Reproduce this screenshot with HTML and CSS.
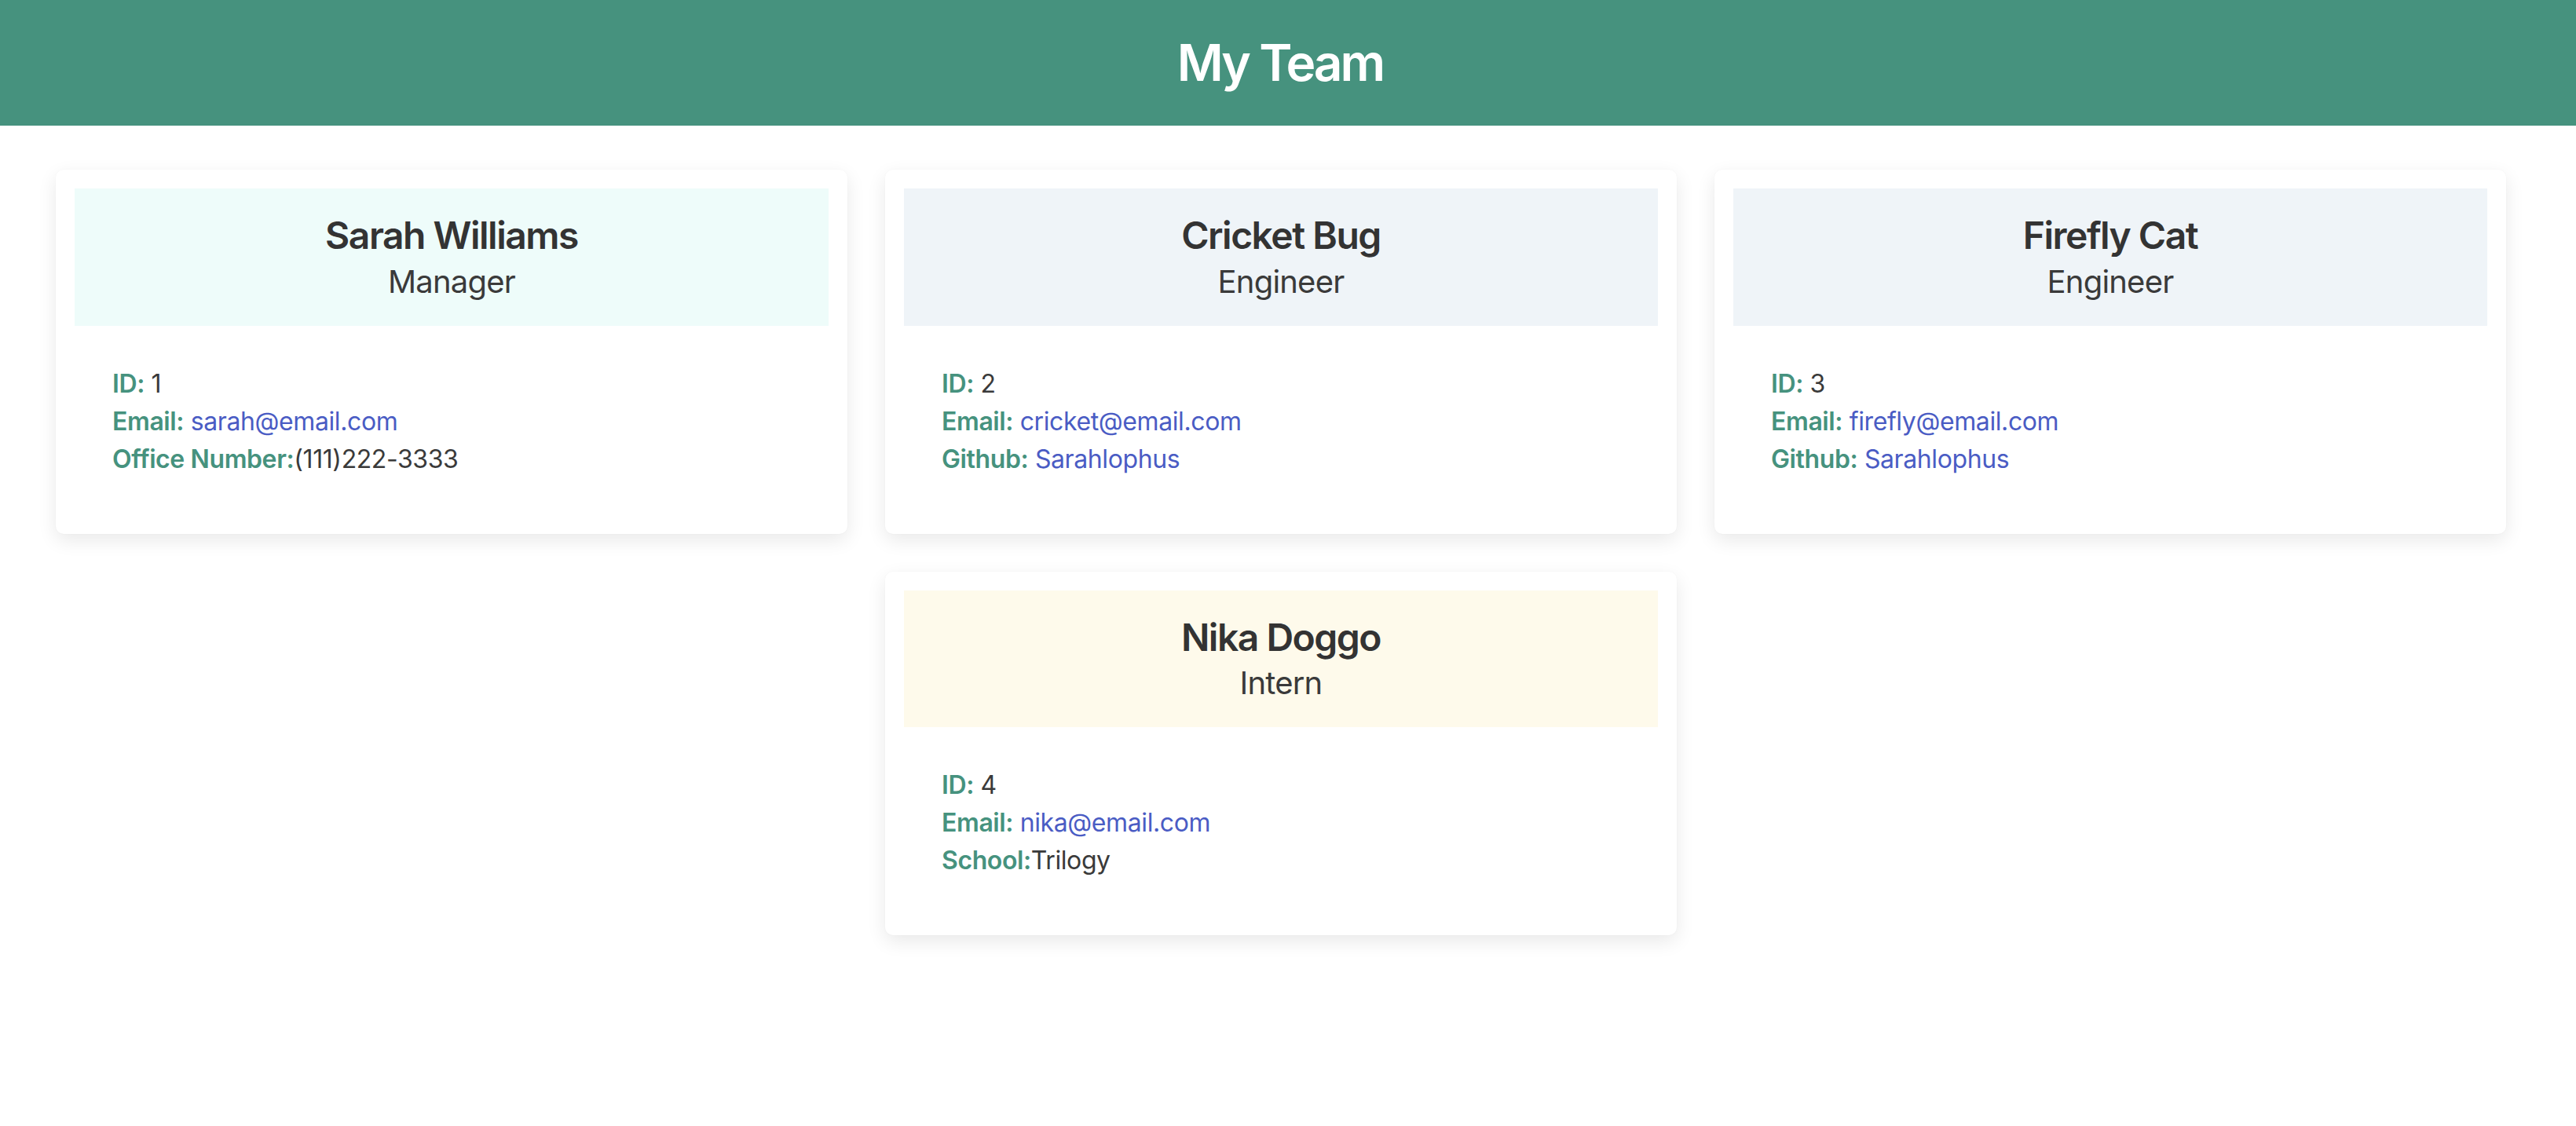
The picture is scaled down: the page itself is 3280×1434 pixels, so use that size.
FILE: index.html
```html
<!DOCTYPE html>
<html lang="en">
<head>
<meta charset="utf-8">
<title>My Team</title>
<link rel="stylesheet" href="styles.css">
</head>
<body>
<header class="topbar">
  <h1 class="topbar-title">My Team</h1>
</header>
<main class="team">
  <section class="card">
    <div class="card-head head-manager">
      <h2 class="card-name">Sarah Williams</h2>
      <p class="card-role">Manager</p>
    </div>
    <ul class="card-body">
      <li><span class="label">ID:</span> 1</li>
      <li><span class="label">Email:</span> <a class="link" href="#">sarah@email.com</a></li>
      <li><span class="label">Office Number:</span>(111)222-3333</li>
    </ul>
  </section>
  <section class="card">
    <div class="card-head head-engineer">
      <h2 class="card-name">Cricket Bug</h2>
      <p class="card-role">Engineer</p>
    </div>
    <ul class="card-body">
      <li><span class="label">ID:</span> 2</li>
      <li><span class="label">Email:</span> <a class="link" href="#">cricket@email.com</a></li>
      <li><span class="label">Github:</span> <a class="link" href="#">Sarahlophus</a></li>
    </ul>
  </section>
  <section class="card">
    <div class="card-head head-engineer">
      <h2 class="card-name">Firefly Cat</h2>
      <p class="card-role">Engineer</p>
    </div>
    <ul class="card-body">
      <li><span class="label">ID:</span> 3</li>
      <li><span class="label">Email:</span> <a class="link" href="#">firefly@email.com</a></li>
      <li><span class="label">Github:</span> <a class="link" href="#">Sarahlophus</a></li>
    </ul>
  </section>
  <section class="card">
    <div class="card-head head-intern">
      <h2 class="card-name">Nika Doggo</h2>
      <p class="card-role">Intern</p>
    </div>
    <ul class="card-body">
      <li><span class="label">ID:</span> 4</li>
      <li><span class="label">Email:</span> <a class="link" href="#">nika@email.com</a></li>
      <li><span class="label">School:</span>Trilogy</li>
    </ul>
  </section>
</main>
</body>
</html>
```
FILE: styles.css
```css
* { box-sizing: border-box; }

html, body {
  margin: 0;
  padding: 0;
  background: #ffffff;
}

body {
  font-family: Inter, "Noto Sans", "Liberation Sans", sans-serif;
  color: #333333;
}

.topbar {
  height: 160px;
  background: #46927e;
  display: flex;
  align-items: center;
  justify-content: center;
  padding-right: 20px;
}

.topbar-title {
  margin: 0;
  color: #ffffff;
  font-size: 64px;
  font-weight: 600;
  line-height: 1.2;
  letter-spacing: -3px;
}

.team {
  display: flex;
  flex-wrap: wrap;
  justify-content: center;
  gap: 48px;
  padding: 56px 88px 60px 70px;
}

.card {
  flex: 0 0 1008px;
  width: 1008px;
  background: #ffffff;
  border-radius: 10px;
  padding: 24px;
  box-shadow: 0 8px 24px rgba(0, 0, 0, 0.09), 0 0 2px rgba(0, 0, 0, 0.04);
}

.card-head {
  text-align: center;
  padding: 31px 24px 26px;
}

.head-manager { background: #eefcfa; }
.head-engineer { background: #eff4f8; }
.head-intern { background: #fefaeb; }

.card-name {
  margin: 0;
  font-size: 48px;
  font-weight: 600;
  line-height: 1.2;
  letter-spacing: -1.5px;
  color: #333333;
}

.card-role {
  margin: 0;
  font-size: 40px;
  font-weight: 400;
  line-height: 1.5;
  letter-spacing: -0.8px;
  color: #3a3a3a;
}

.card-body {
  list-style: none;
  margin: 0;
  padding: 50px 48px 47px;
  font-size: 32px;
  line-height: 48px;
  letter-spacing: -0.4px;
  color: #3a3a3a;
}

.label {
  color: #46927e;
  font-weight: 600;
}

.link {
  color: #4a5cc4;
  text-decoration: none;
}
```
